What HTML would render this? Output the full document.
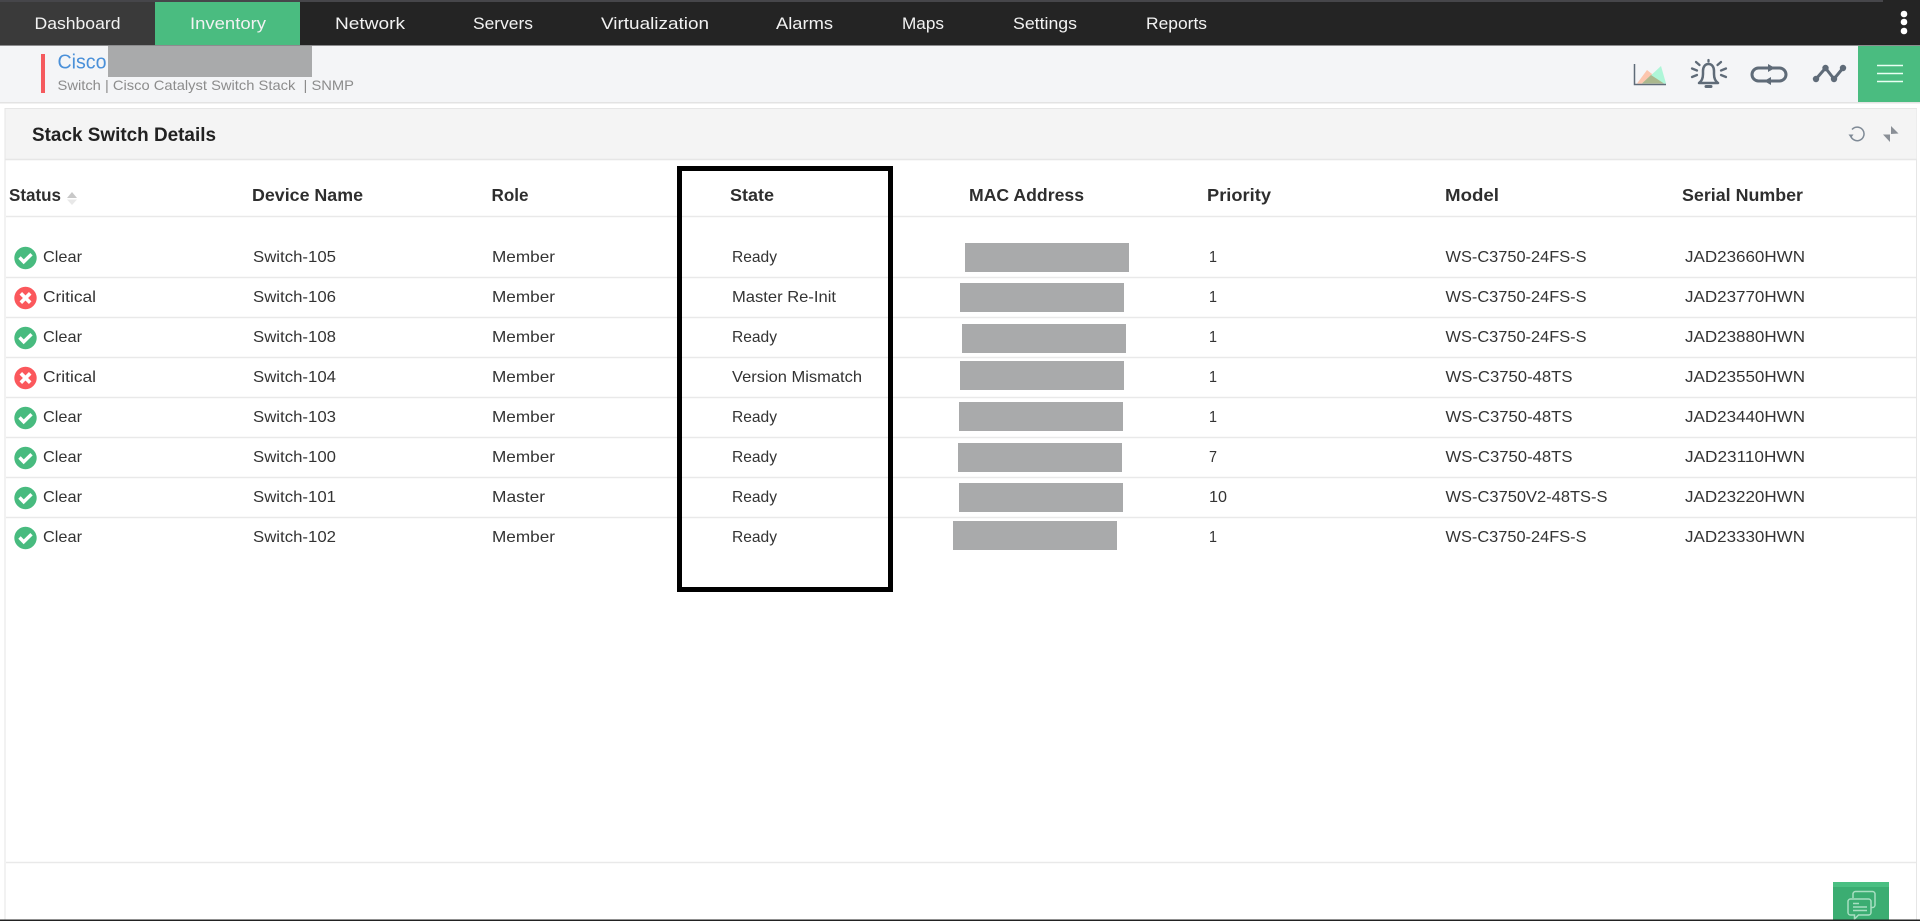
<!DOCTYPE html>
<html lang="en"><head><meta charset="utf-8"><title>Stack Switch Details</title>
<style>
html,body{margin:0;padding:0;width:1920px;height:921px;overflow:hidden;background:#fff}
svg{display:block;font-family:"Liberation Sans",Arial,sans-serif}
.nav text{font-size:16.5px;fill:#f2f2f2}
.h text{font-size:17.5px;font-weight:700;fill:#2e2e2e}
.r text{font-size:16px;fill:#333}
.ln{stroke:#e9e9e9;stroke-width:1.5}
.ic{fill:none;stroke:#5f6b78;stroke-width:3;stroke-linecap:round;stroke-linejoin:round}
</style></head><body>
<svg width="1920" height="921" viewBox="0 0 1920 921" xmlns="http://www.w3.org/2000/svg">
<defs>
<g id="ok"><circle r="11.2" fill="#48bb7f"/><path d="M-6-.5-1.8 3.8 6-3.8" fill="none" stroke="#fff" stroke-width="3.4"/></g>
<g id="cr"><circle r="11.2" fill="#fb585c"/><path d="M-4.7-4.7 4.7 4.7M4.7-4.7-4.7 4.7" fill="none" stroke="#fff" stroke-width="3.6"/></g>
</defs>
<rect width="1920" height="921" fill="#fff"/>
<!-- top nav -->
<rect width="1920" height="45.500" fill="#242424"/>
<rect width="1883" height="2" fill="#46464a"/>
<rect y="2" width="155" height="43" fill="#3a3a3a"/>
<rect x="155" y="2" width="145" height="43" fill="#4abc80"/>
<g class="nav">
<text x="34.5" y="29" textLength="86" lengthAdjust="spacingAndGlyphs">Dashboard</text>
<text x="190" y="29" textLength="76" lengthAdjust="spacingAndGlyphs">Inventory</text>
<text x="335" y="29" textLength="70" lengthAdjust="spacingAndGlyphs">Network</text>
<text x="473" y="29" textLength="60" lengthAdjust="spacingAndGlyphs">Servers</text>
<text x="601" y="29" textLength="108" lengthAdjust="spacingAndGlyphs">Virtualization</text>
<text x="776" y="29" textLength="57" lengthAdjust="spacingAndGlyphs">Alarms</text>
<text x="902" y="29" textLength="42" lengthAdjust="spacingAndGlyphs">Maps</text>
<text x="1013" y="29" textLength="64" lengthAdjust="spacingAndGlyphs">Settings</text>
<text x="1146" y="29" textLength="61" lengthAdjust="spacingAndGlyphs">Reports</text>
</g>
<circle cx="1904" cy="14" r="3.3" fill="#fff"/><circle cx="1904" cy="22" r="3.3" fill="#fff"/><circle cx="1904" cy="31" r="3.3" fill="#fff"/>
<!-- sub header -->
<rect y="45.500" width="1920" height="56.500" fill="#f4f5f7"/>
<rect y="102" width="1920" height="1.5" fill="#e3e3e3"/>
<rect x="41" y="54" width="4" height="39" fill="#f55a5e"/>
<text x="57.5" y="68.5" font-size="20" fill="#4a90d9" textLength="49" lengthAdjust="spacingAndGlyphs">Cisco</text>
<rect x="108" y="46" width="204" height="31" fill="#a9aaab"/>
<text x="57.5" y="90" font-size="14" fill="#8c8c8c" textLength="296.5" lengthAdjust="spacingAndGlyphs">Switch | Cisco Catalyst Switch Stack &#160;| SNMP</text>
<!-- toolbar icons -->
<path d="M1634.500 64V84.500H1666" fill="none" stroke="#5f6b78" stroke-width="1.500"/>
<path d="M1637 83.500 1647 70 1664 83.500Z" fill="#fcc6ae"/>
<path d="M1642 83.500 1661 66 1666 83.500Z" fill="#aef6d8"/>
<path d="M1642 83.500 1651 75 1664 83.500Z" fill="#abb88e"/>
<g class="ic">
<path stroke-width="2.500" d="M1699 83c3-2 4-5 4-9v-3c0-4 2-7 5.500-7s5.500 3 5.500 7v3c0 4 1 7 4 9Z"/>
<path d="M1706 86.500h5"/>
<path stroke-width="2.300" d="M1692 68.500l5 2M1692 77l5-2M1696 62l3.500 3M1708.500 60v1.500M1721 62l-3.500 3M1726 68.500l-5 2M1726 77l-5-2"/>
</g>
<g class="ic">
<path d="M1769 68h-10.500a6.500 6.500 0 0 0 0 13h10M1769 81h10.500a6.500 6.500 0 0 0 0-13h-10"/>
</g>
<path d="M1768 64 1775 68 1768 72ZM1771 77 1764 81 1771 85Z" fill="#5f6b78"/>
<path d="M1816 79 1825.500 68 1834 79 1843 68" fill="none" stroke="#5f6b78" stroke-width="3"/>
<circle cx="1816" cy="79" r="3.200" fill="#5f6b78"/><circle cx="1825.500" cy="68" r="3.200" fill="#5f6b78"/><circle cx="1834" cy="79" r="3.200" fill="#5f6b78"/><circle cx="1843" cy="68" r="3.200" fill="#5f6b78"/>
<rect x="1858" y="46" width="62" height="56" fill="#4abc80"/>
<path d="M1877 65.500h26M1877 73.500h26M1877 81.500h26" stroke="#eafff3" stroke-width="1.500"/>
<!-- panel -->
<rect x="5" y="108.500" width="1911.500" height="812" fill="#fff" stroke="#e6e6e6"/>
<rect x="5.500" y="109" width="1911" height="50" fill="#f4f4f4"/>
<path d="M5 159.500H1917" stroke="#e6e6e6" stroke-width="1.500"/>
<text x="32" y="141" font-size="19.500" font-weight="700" fill="#222" textLength="184" lengthAdjust="spacingAndGlyphs">Stack Switch Details</text>
<path d="M1852 129.500a6.800 6.800 0 1 1-1.500 5.500" fill="none" stroke="#7f8a96" stroke-width="1.500"/>
<path d="M1848.500 134.500h5l-2.500 3.500Z" fill="#7f8a96"/>
<path d="M1891 126 1898.500 133.500 1891 134Z" fill="#8a8f96"/><path d="M1883 134.500 1890 134.500 1890 142Z" fill="#8a8f96"/>
<!-- table header -->
<g class="h" transform="translate(0,-1)">
<text x="9" y="202" textLength="52" lengthAdjust="spacingAndGlyphs">Status</text>
<text x="252" y="202" textLength="111" lengthAdjust="spacingAndGlyphs">Device Name</text>
<text x="491.500" y="202" textLength="37" lengthAdjust="spacingAndGlyphs">Role</text>
<text x="730" y="202" textLength="44" lengthAdjust="spacingAndGlyphs">State</text>
<text x="969" y="202" textLength="115" lengthAdjust="spacingAndGlyphs">MAC Address</text>
<text x="1207" y="202" textLength="64" lengthAdjust="spacingAndGlyphs">Priority</text>
<text x="1445" y="202" textLength="54" lengthAdjust="spacingAndGlyphs">Model</text>
<text x="1682" y="202" textLength="121" lengthAdjust="spacingAndGlyphs">Serial Number</text>
</g>
<path d="M72 192 77 198H67Z" fill="#c8c8c8"/><path d="M72 205 77 199.500H67Z" fill="#e8e8e8"/>
<!-- lines -->
<g class="ln"><path d="M6 216.500H1916M6 277.500H1916M6 317.500H1916M6 357.500H1916M6 397.500H1916M6 437.500H1916M6 477.500H1916M6 517.500H1916M6 862.500H1916"/></g>
<!-- status icons -->
<use href="#ok" x="25.500" y="258"/><use href="#cr" x="25.500" y="298"/><use href="#ok" x="25.500" y="338"/><use href="#cr" x="25.500" y="378"/>
<use href="#ok" x="25.500" y="418"/><use href="#ok" x="25.500" y="458"/><use href="#ok" x="25.500" y="498"/><use href="#ok" x="25.500" y="538"/>
<!-- rows -->
<g class="r" transform="translate(0,-1)">
<text x="43" y="263" textLength="39" lengthAdjust="spacingAndGlyphs">Clear</text>
<text x="253" y="263" textLength="83" lengthAdjust="spacingAndGlyphs">Switch-105</text>
<text x="492" y="263" textLength="63" lengthAdjust="spacingAndGlyphs">Member</text>
<text x="732" y="263" textLength="45" lengthAdjust="spacingAndGlyphs">Ready</text>
<text x="1209" y="263" textLength="8" lengthAdjust="spacingAndGlyphs">1</text>
<text x="1445.500" y="263" textLength="141" lengthAdjust="spacingAndGlyphs">WS-C3750-24FS-S</text>
<text x="1685" y="263" textLength="120" lengthAdjust="spacingAndGlyphs">JAD23660HWN</text>

<text x="43" y="303" textLength="53" lengthAdjust="spacingAndGlyphs">Critical</text>
<text x="253" y="303" textLength="83" lengthAdjust="spacingAndGlyphs">Switch-106</text>
<text x="492" y="303" textLength="63" lengthAdjust="spacingAndGlyphs">Member</text>
<text x="732" y="303" textLength="104" lengthAdjust="spacingAndGlyphs">Master Re-Init</text>
<text x="1209" y="303" textLength="8" lengthAdjust="spacingAndGlyphs">1</text>
<text x="1445.500" y="303" textLength="141" lengthAdjust="spacingAndGlyphs">WS-C3750-24FS-S</text>
<text x="1685" y="303" textLength="120" lengthAdjust="spacingAndGlyphs">JAD23770HWN</text>

<text x="43" y="343" textLength="39" lengthAdjust="spacingAndGlyphs">Clear</text>
<text x="253" y="343" textLength="83" lengthAdjust="spacingAndGlyphs">Switch-108</text>
<text x="492" y="343" textLength="63" lengthAdjust="spacingAndGlyphs">Member</text>
<text x="732" y="343" textLength="45" lengthAdjust="spacingAndGlyphs">Ready</text>
<text x="1209" y="343" textLength="8" lengthAdjust="spacingAndGlyphs">1</text>
<text x="1445.500" y="343" textLength="141" lengthAdjust="spacingAndGlyphs">WS-C3750-24FS-S</text>
<text x="1685" y="343" textLength="120" lengthAdjust="spacingAndGlyphs">JAD23880HWN</text>

<text x="43" y="383" textLength="53" lengthAdjust="spacingAndGlyphs">Critical</text>
<text x="253" y="383" textLength="83" lengthAdjust="spacingAndGlyphs">Switch-104</text>
<text x="492" y="383" textLength="63" lengthAdjust="spacingAndGlyphs">Member</text>
<text x="732" y="383" textLength="130" lengthAdjust="spacingAndGlyphs">Version Mismatch</text>
<text x="1209" y="383" textLength="8" lengthAdjust="spacingAndGlyphs">1</text>
<text x="1445.500" y="383" textLength="127" lengthAdjust="spacingAndGlyphs">WS-C3750-48TS</text>
<text x="1685" y="383" textLength="120" lengthAdjust="spacingAndGlyphs">JAD23550HWN</text>

<text x="43" y="423" textLength="39" lengthAdjust="spacingAndGlyphs">Clear</text>
<text x="253" y="423" textLength="83" lengthAdjust="spacingAndGlyphs">Switch-103</text>
<text x="492" y="423" textLength="63" lengthAdjust="spacingAndGlyphs">Member</text>
<text x="732" y="423" textLength="45" lengthAdjust="spacingAndGlyphs">Ready</text>
<text x="1209" y="423" textLength="8" lengthAdjust="spacingAndGlyphs">1</text>
<text x="1445.500" y="423" textLength="127" lengthAdjust="spacingAndGlyphs">WS-C3750-48TS</text>
<text x="1685" y="423" textLength="120" lengthAdjust="spacingAndGlyphs">JAD23440HWN</text>

<text x="43" y="463" textLength="39" lengthAdjust="spacingAndGlyphs">Clear</text>
<text x="253" y="463" textLength="83" lengthAdjust="spacingAndGlyphs">Switch-100</text>
<text x="492" y="463" textLength="63" lengthAdjust="spacingAndGlyphs">Member</text>
<text x="732" y="463" textLength="45" lengthAdjust="spacingAndGlyphs">Ready</text>
<text x="1209" y="463" textLength="8" lengthAdjust="spacingAndGlyphs">7</text>
<text x="1445.500" y="463" textLength="127" lengthAdjust="spacingAndGlyphs">WS-C3750-48TS</text>
<text x="1685" y="463" textLength="120" lengthAdjust="spacingAndGlyphs">JAD23110HWN</text>

<text x="43" y="503" textLength="39" lengthAdjust="spacingAndGlyphs">Clear</text>
<text x="253" y="503" textLength="83" lengthAdjust="spacingAndGlyphs">Switch-101</text>
<text x="492" y="503" textLength="53" lengthAdjust="spacingAndGlyphs">Master</text>
<text x="732" y="503" textLength="45" lengthAdjust="spacingAndGlyphs">Ready</text>
<text x="1209" y="503" textLength="18" lengthAdjust="spacingAndGlyphs">10</text>
<text x="1445.500" y="503" textLength="162" lengthAdjust="spacingAndGlyphs">WS-C3750V2-48TS-S</text>
<text x="1685" y="503" textLength="120" lengthAdjust="spacingAndGlyphs">JAD23220HWN</text>

<text x="43" y="543" textLength="39" lengthAdjust="spacingAndGlyphs">Clear</text>
<text x="253" y="543" textLength="83" lengthAdjust="spacingAndGlyphs">Switch-102</text>
<text x="492" y="543" textLength="63" lengthAdjust="spacingAndGlyphs">Member</text>
<text x="732" y="543" textLength="45" lengthAdjust="spacingAndGlyphs">Ready</text>
<text x="1209" y="543" textLength="8" lengthAdjust="spacingAndGlyphs">1</text>
<text x="1445.500" y="543" textLength="141" lengthAdjust="spacingAndGlyphs">WS-C3750-24FS-S</text>
<text x="1685" y="543" textLength="120" lengthAdjust="spacingAndGlyphs">JAD23330HWN</text>
</g>
<!-- redactions -->
<g fill="#a9aaab">
<rect x="965" y="243" width="164" height="29"/>
<rect x="960" y="283" width="164" height="29"/>
<rect x="962" y="324" width="164" height="29"/>
<rect x="960" y="361" width="164" height="29"/>
<rect x="959" y="402" width="164" height="29"/>
<rect x="958" y="443" width="164" height="29"/>
<rect x="959" y="483" width="164" height="29"/>
<rect x="953" y="521" width="164" height="29"/>
</g>
<!-- black highlight box -->
<rect x="679.500" y="168.500" width="211" height="421" fill="none" stroke="#000" stroke-width="5"/>
<!-- chat button -->
<rect x="1833" y="882" width="56" height="39" fill="#3bad72"/>
<rect x="1833" y="882" width="56" height="5" fill="#4abf82"/>
<g fill="none" stroke="#a8dfc2" stroke-width="1.500">
<path d="M1853 898v-4a2.500 2.500 0 0 1 2.500-2.500h17a2.500 2.500 0 0 1 2.500 2.500v11a2.500 2.500 0 0 1-2.500 2.500h-1.500"/>
<path d="M1850.500 899h18a2.500 2.500 0 0 1 2.500 2.500v11a2.500 2.500 0 0 1-2.500 2.500h-10l-4 4v-4h-4a2.500 2.500 0 0 1-2.500-2.500v-11a2.500 2.500 0 0 1 2.500-2.500Z"/>
<path d="M1853 903.500h6M1853 907h14M1853 910.500h14"/>
</g>
<rect y="919.500" width="1920" height="1.500" fill="#222"/>
</svg>
</body></html>
